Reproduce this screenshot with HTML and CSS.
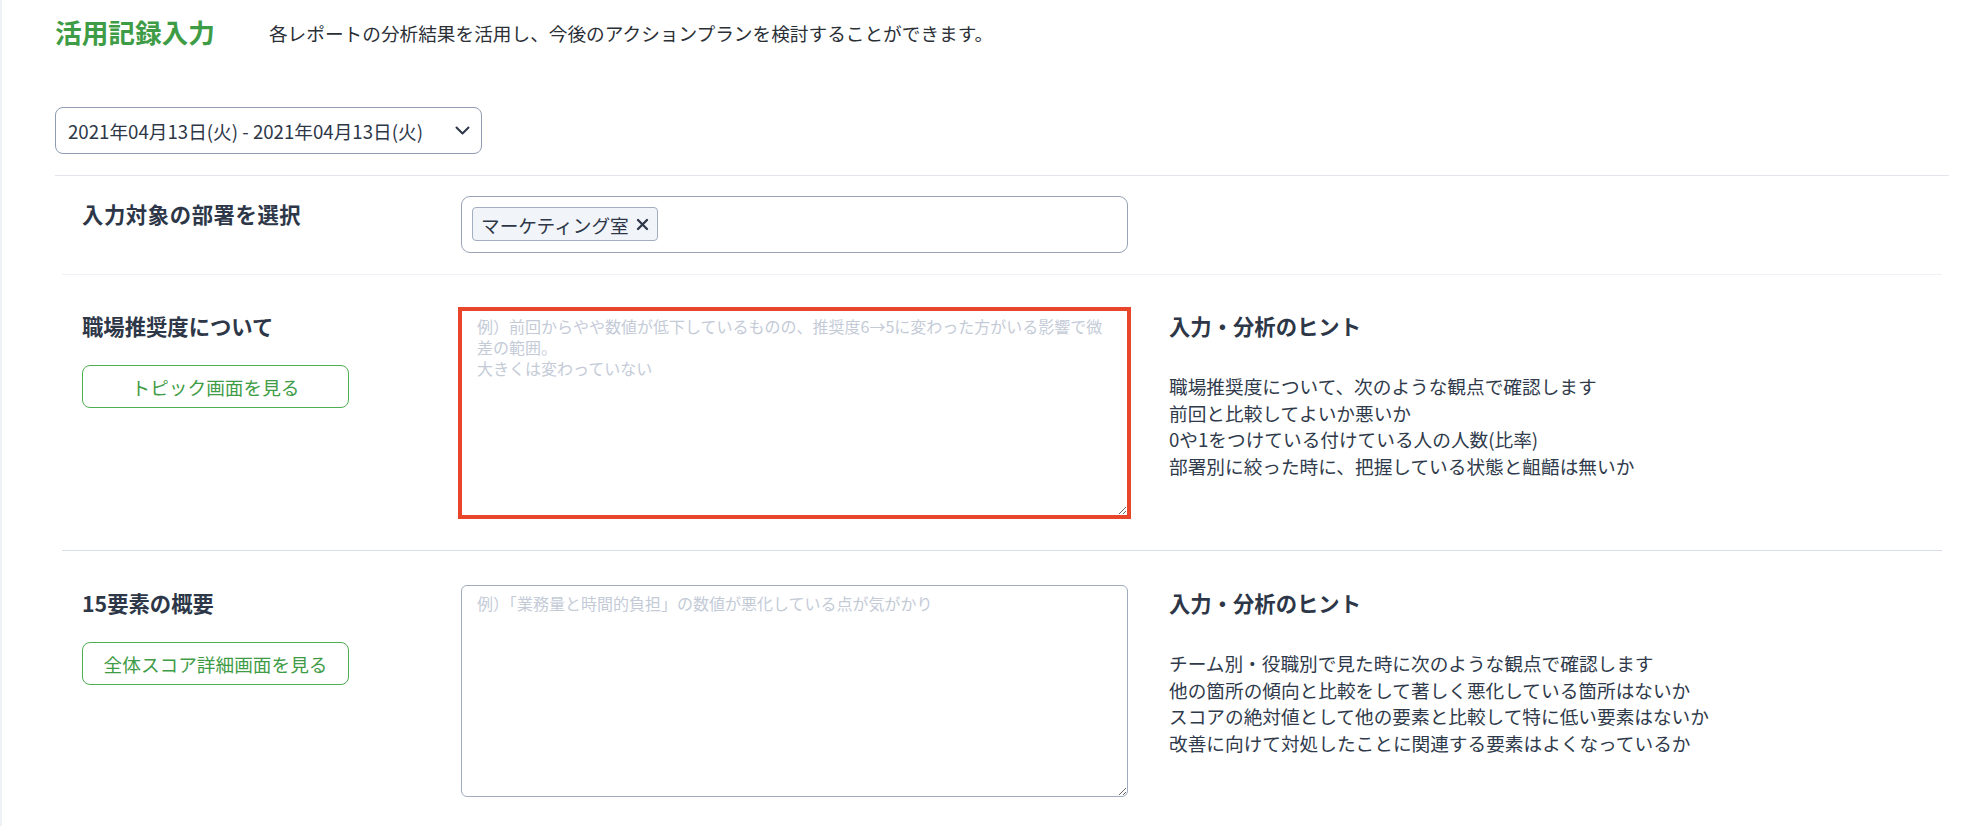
FILE: index.html
```html
<!DOCTYPE html>
<html lang="ja">
<head>
    <meta charset="UTF-8">
    <meta name="viewport" content="width=device-width, initial-scale=1.0">
    <title>活用記録入力</title>
    <link rel="stylesheet" href="styles.css">
</head>
<body>
    <div class="page">
        <header class="page-header">
            <h1 class="page-title">活用記録入力</h1>
            <p class="page-lead">各レポートの分析結果を活用し、今後のアクションプランを検討することができます。</p>
        </header>

        <div class="period">
            <button type="button" class="period-select">
                <span>2021年04月13日(火) - 2021年04月13日(火)</span>
                <svg class="chevron" width="15" height="9" viewBox="0 0 15 9">
                    <polyline points="1.5,1.5 7.5,7.5 13.5,1.5" fill="none" stroke="#2d3748" stroke-width="2" stroke-linecap="round" stroke-linejoin="round"/>
                </svg>
            </button>
        </div>

        <section class="record-list">
            <div class="record-row record-row-first">
                <div class="record-side">
                    <h2 class="record-label record-label-wide">入力対象の部署を選択</h2>
                </div>
                <div class="tag-input">
                    <span class="tag">マーケティング室
                        <svg class="tag-close" width="13" height="13" viewBox="0 0 13 13">
                            <line x1="2" y1="2" x2="11" y2="11" stroke="#2d3748" stroke-width="2.3" stroke-linecap="round"/>
                            <line x1="11" y1="2" x2="2" y2="11" stroke="#2d3748" stroke-width="2.3" stroke-linecap="round"/>
                        </svg>
                    </span>
                </div>
            </div>

            <div class="record-row record-row-soft">
                <div class="record-side">
                    <h2 class="record-label">職場推奨度について</h2>
                    <button type="button" class="link-button">トピック画面を見る</button>
                </div>
                <textarea class="record-text is-focused" placeholder="例）前回からやや数値が低下しているものの、推奨度6→5に変わった方がいる影響で微差の範囲。&#10;大きくは変わっていない"></textarea>
                <div class="hint">
                    <h3 class="hint-title">入力・分析のヒント</h3>
                    <p>職場推奨度について、次のような観点で確認します</p>
                    <p>前回と比較してよいか悪いか</p>
                    <p>0や1をつけている付けている人の人数(比率)</p>
                    <p>部署別に絞った時に、把握している状態と齟齬は無いか</p>
                </div>
            </div>

            <div class="record-row">
                <div class="record-side">
                    <h2 class="record-label">15要素の概要</h2>
                    <button type="button" class="link-button">全体スコア詳細画面を見る</button>
                </div>
                <textarea class="record-text" placeholder="例）「業務量と時間的負担」の数値が悪化している点が気がかり"></textarea>
                <div class="hint">
                    <h3 class="hint-title">入力・分析のヒント</h3>
                    <p>チーム別・役職別で見た時に次のような観点で確認します</p>
                    <p>他の箇所の傾向と比較をして著しく悪化している箇所はないか</p>
                    <p>スコアの絶対値として他の要素と比較して特に低い要素はないか</p>
                    <p>改善に向けて対処したことに関連する要素はよくなっているか</p>
                </div>
            </div>
        </section>
    </div>
</body>
</html>
```

FILE: styles.css
```css
body {
    margin: 0;
    background-color: #fff;
    font-family: 'Noto Sans CJK JP', 'Noto Sans', sans-serif;
    font-size: 18.67px;
    color: #2d3748;
}

.page {
    border-left: 2px solid #eef2f7;
    padding: 12px 31px 0 53px;
    min-height: 826px;
    box-sizing: border-box;
}

.page-header {
    display: flex;
    align-items: center;
    height: 40px;
}

.page-title {
    margin: 0;
    font-size: 26.67px;
    line-height: 40px;
    font-weight: 700;
    color: #3f9c46;
}

.page-lead {
    margin: 0 0 0 54px;
    font-size: 18.67px;
    color: #2b2f36;
}

.period {
    margin-top: 55px;
    padding-bottom: 21px;
    border-bottom: 1px solid #e3e7ed;
}

.period-select {
    display: flex;
    align-items: center;
    justify-content: space-between;
    width: 427px;
    height: 47px;
    padding: 0 11px 0 12px;
    border: 1px solid #8e9bb0;
    border-radius: 8px;
    background-color: #fff;
    font-family: inherit;
    font-size: 18.67px;
    color: #2d3748;
    box-sizing: border-box;
}

.record-list {
    margin: 0 7px;
}

.record-row {
    display: grid;
    grid-template-columns: 379px 667px 1fr;
    padding: 34px 20px 34px;
}

.record-row-first {
    padding: 20px 20px 21px;
}

.record-row-soft {
    border-top: 1px solid #eef1f5;
    border-bottom: 1px solid #d8dde6;
    padding-top: 33px;
}

.record-label,
.hint-title {
    margin: 2px 0 0;
    font-size: 21.33px;
    line-height: 32px;
    font-weight: 700;
    color: #2d3748;
}

.record-label-wide {
    letter-spacing: 0.6px;
}

.link-button {
    display: block;
    width: 267px;
    height: 43px;
    margin-top: 23px;
    border: 1px solid #4caf50;
    border-radius: 8px;
    background-color: #fff;
    font-family: inherit;
    font-size: 18.67px;
    color: #3f9c46;
}

.tag-input {
    padding: 10px;
    border: 1px solid #98a3b6;
    border-radius: 9px;
    height: 57px;
    box-sizing: border-box;
}

.tag {
    display: inline-flex;
    align-items: center;
    gap: 7px;
    height: 34px;
    padding: 0 8px 0 8px;
    border: 1px solid #a3aec0;
    border-radius: 4px;
    background-color: #f1f4f9;
    font-size: 18.67px;
    color: #2d3748;
    box-sizing: border-box;
}

.record-text {
    display: block;
    width: 667px;
    height: 212px;
    padding: 7px 15px;
    border: 1px solid #a0abbd;
    border-radius: 6px;
    font-family: inherit;
    font-size: 16px;
    line-height: 21px;
    color: #2d3748;
    box-sizing: border-box;
}

.record-text::placeholder {
    color: #c4cbd7;
}

.record-text.is-focused {
    height: 206px;
    margin-top: 2px;
    padding-top: 5px;
    border-radius: 0;
    outline: 4px solid #e9452b;
    outline-offset: -1px;
}

.hint {
    padding-left: 41px;
}

.hint-title {
    margin-bottom: 31px;
}

.hint p {
    margin: 0;
    font-size: 18.67px;
    line-height: 26.67px;
    color: #2f3a4b;
}
```
